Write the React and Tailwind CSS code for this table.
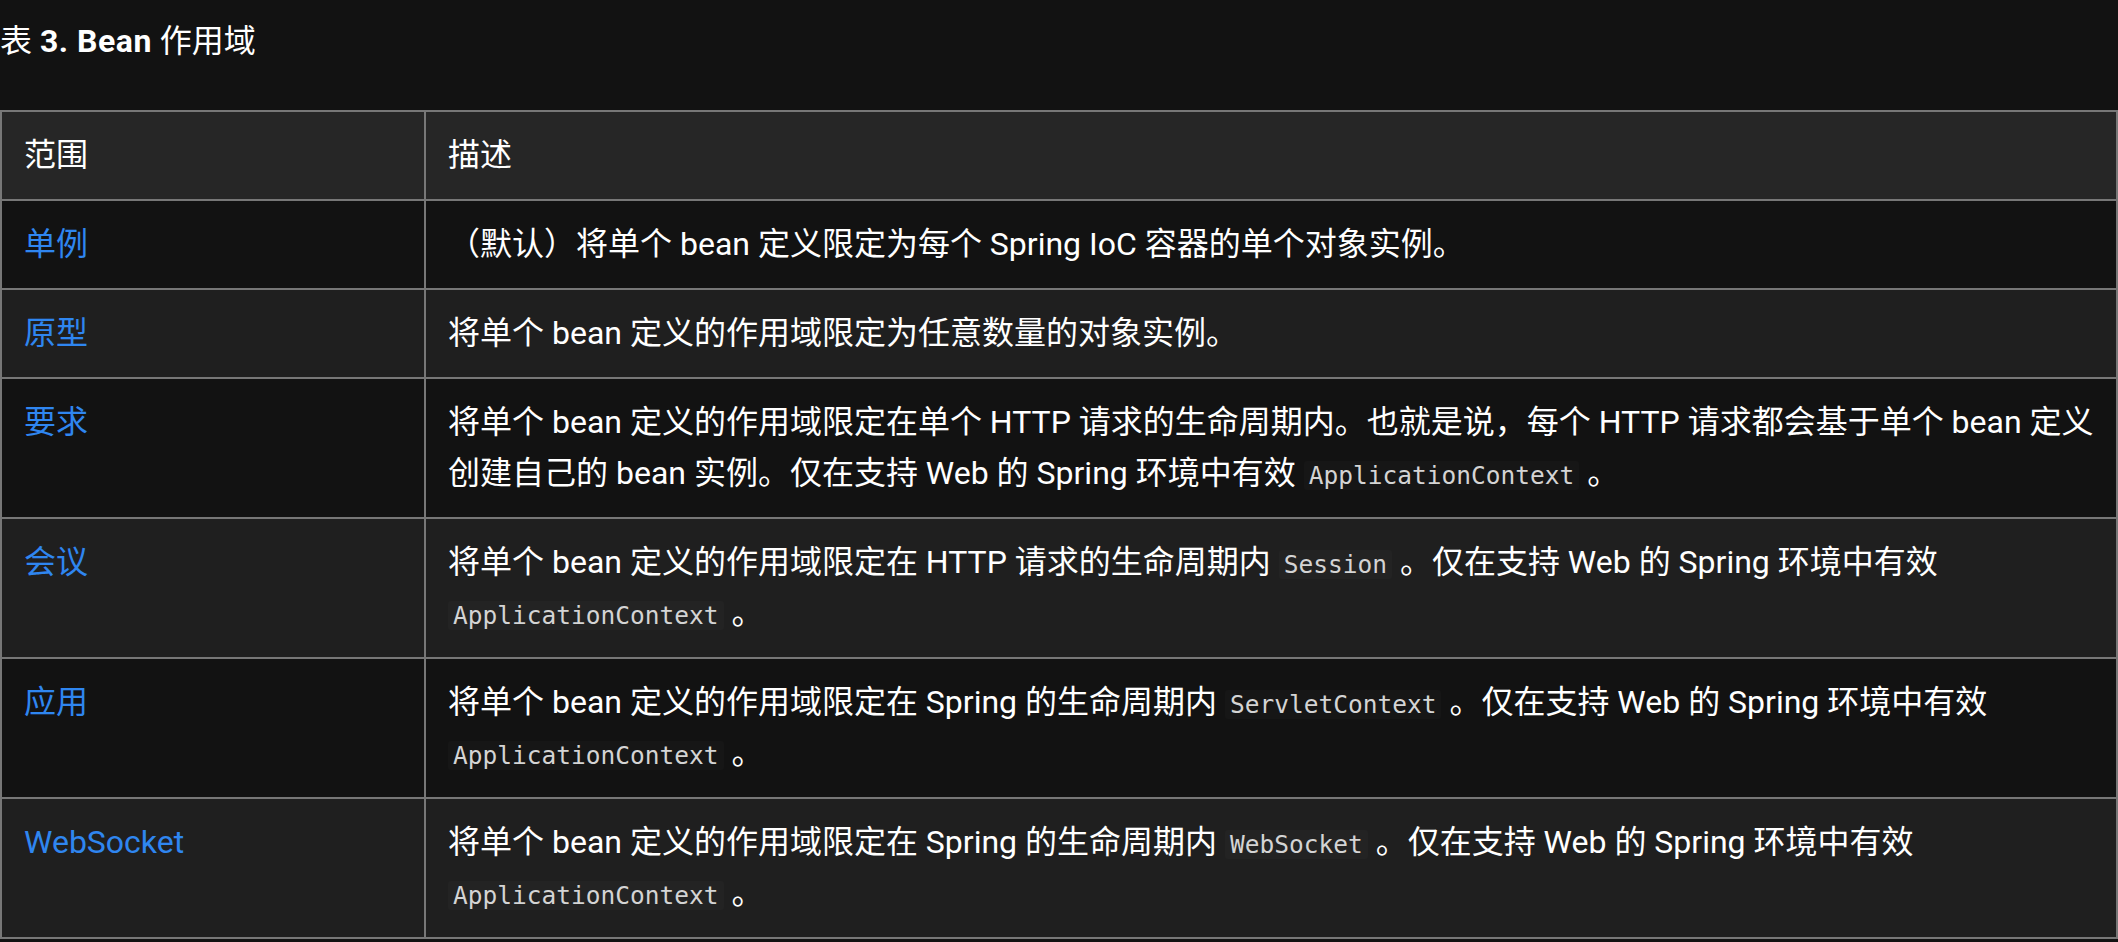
import React from 'react';

const Code = ({ children }) => (
  <code className="rounded-[3px] bg-white/[0.02] px-[5px] font-['DejaVu_Sans_Mono',monospace] text-[24.5px] leading-none text-[#d4d4d4]">
    {children}
  </code>
);

const rows = [
  {
    scope: '单例',
    desc: <>（默认）将单个 bean 定义限定为每个 Spring IoC 容器的单个对象实例。</>,
  },
  {
    scope: '原型',
    desc: <>将单个 bean 定义的作用域限定为任意数量的对象实例。</>,
  },
  {
    scope: '要求',
    desc: (
      <>
        将单个 bean 定义的作用域限定在单个 HTTP 请求的生命周期内。也就是说，每个 HTTP 请求都会基于单个 bean 定义创建自己的 bean 实例。仅在支持 Web 的 Spring 环境中有效 <Code>ApplicationContext</Code> 。
      </>
    ),
  },
  {
    scope: '会议',
    desc: (
      <>
        将单个 bean 定义的作用域限定在 HTTP 请求的生命周期内 <Code>Session</Code> 。仅在支持 Web 的 Spring 环境中有效 <Code>ApplicationContext</Code> 。
      </>
    ),
  },
  {
    scope: '应用',
    desc: (
      <>
        将单个 bean 定义的作用域限定在 Spring 的生命周期内 <Code>ServletContext</Code> 。仅在支持 Web 的 Spring 环境中有效 <Code>ApplicationContext</Code> 。
      </>
    ),
  },
  {
    scope: 'WebSocket',
    desc: (
      <>
        将单个 bean 定义的作用域限定在 Spring 的生命周期内 <Code>WebSocket</Code> 。仅在支持 Web 的 Spring 环境中有效 <Code>ApplicationContext</Code> 。
      </>
    ),
  },
];

export default function App() {
  return (
    <div className="min-h-screen bg-[#121212] font-['Roboto','Noto_Sans_CJK_SC',sans-serif] text-[32px] text-white">
      {/* Caption */}
      <div className="pt-[16px] leading-[50px]">
        表 <span className="font-bold tracking-[0.5px]">3. Bean</span> 作用域
      </div>

      <table className="mt-[44px] w-full table-fixed border-collapse border-2 border-[#777]">
        <colgroup>
          <col className="w-[424px]" />
          <col />
        </colgroup>
        <thead>
          <tr className="bg-[#262626]">
            <th className="border-2 border-[#777] px-[22px] py-[18px] text-left align-top font-normal leading-[51px]">范围</th>
            <th className="border-2 border-[#777] px-[22px] py-[18px] text-left align-top font-normal leading-[51px]">描述</th>
          </tr>
        </thead>
        <tbody>
          {rows.map((row, i) => (
            <tr key={row.scope} className={i % 2 === 0 ? 'bg-[#121212]' : 'bg-[#1f1f1f]'}>
              <td className="border-2 border-[#777] px-[22px] py-[18px] align-top leading-[51px] text-[#2f86f0]">
                {row.scope}
              </td>
              <td className="border-2 border-[#777] px-[22px] py-[18px] align-top leading-[51px]">{row.desc}</td>
            </tr>
          ))}
        </tbody>
      </table>
    </div>
  );
}
